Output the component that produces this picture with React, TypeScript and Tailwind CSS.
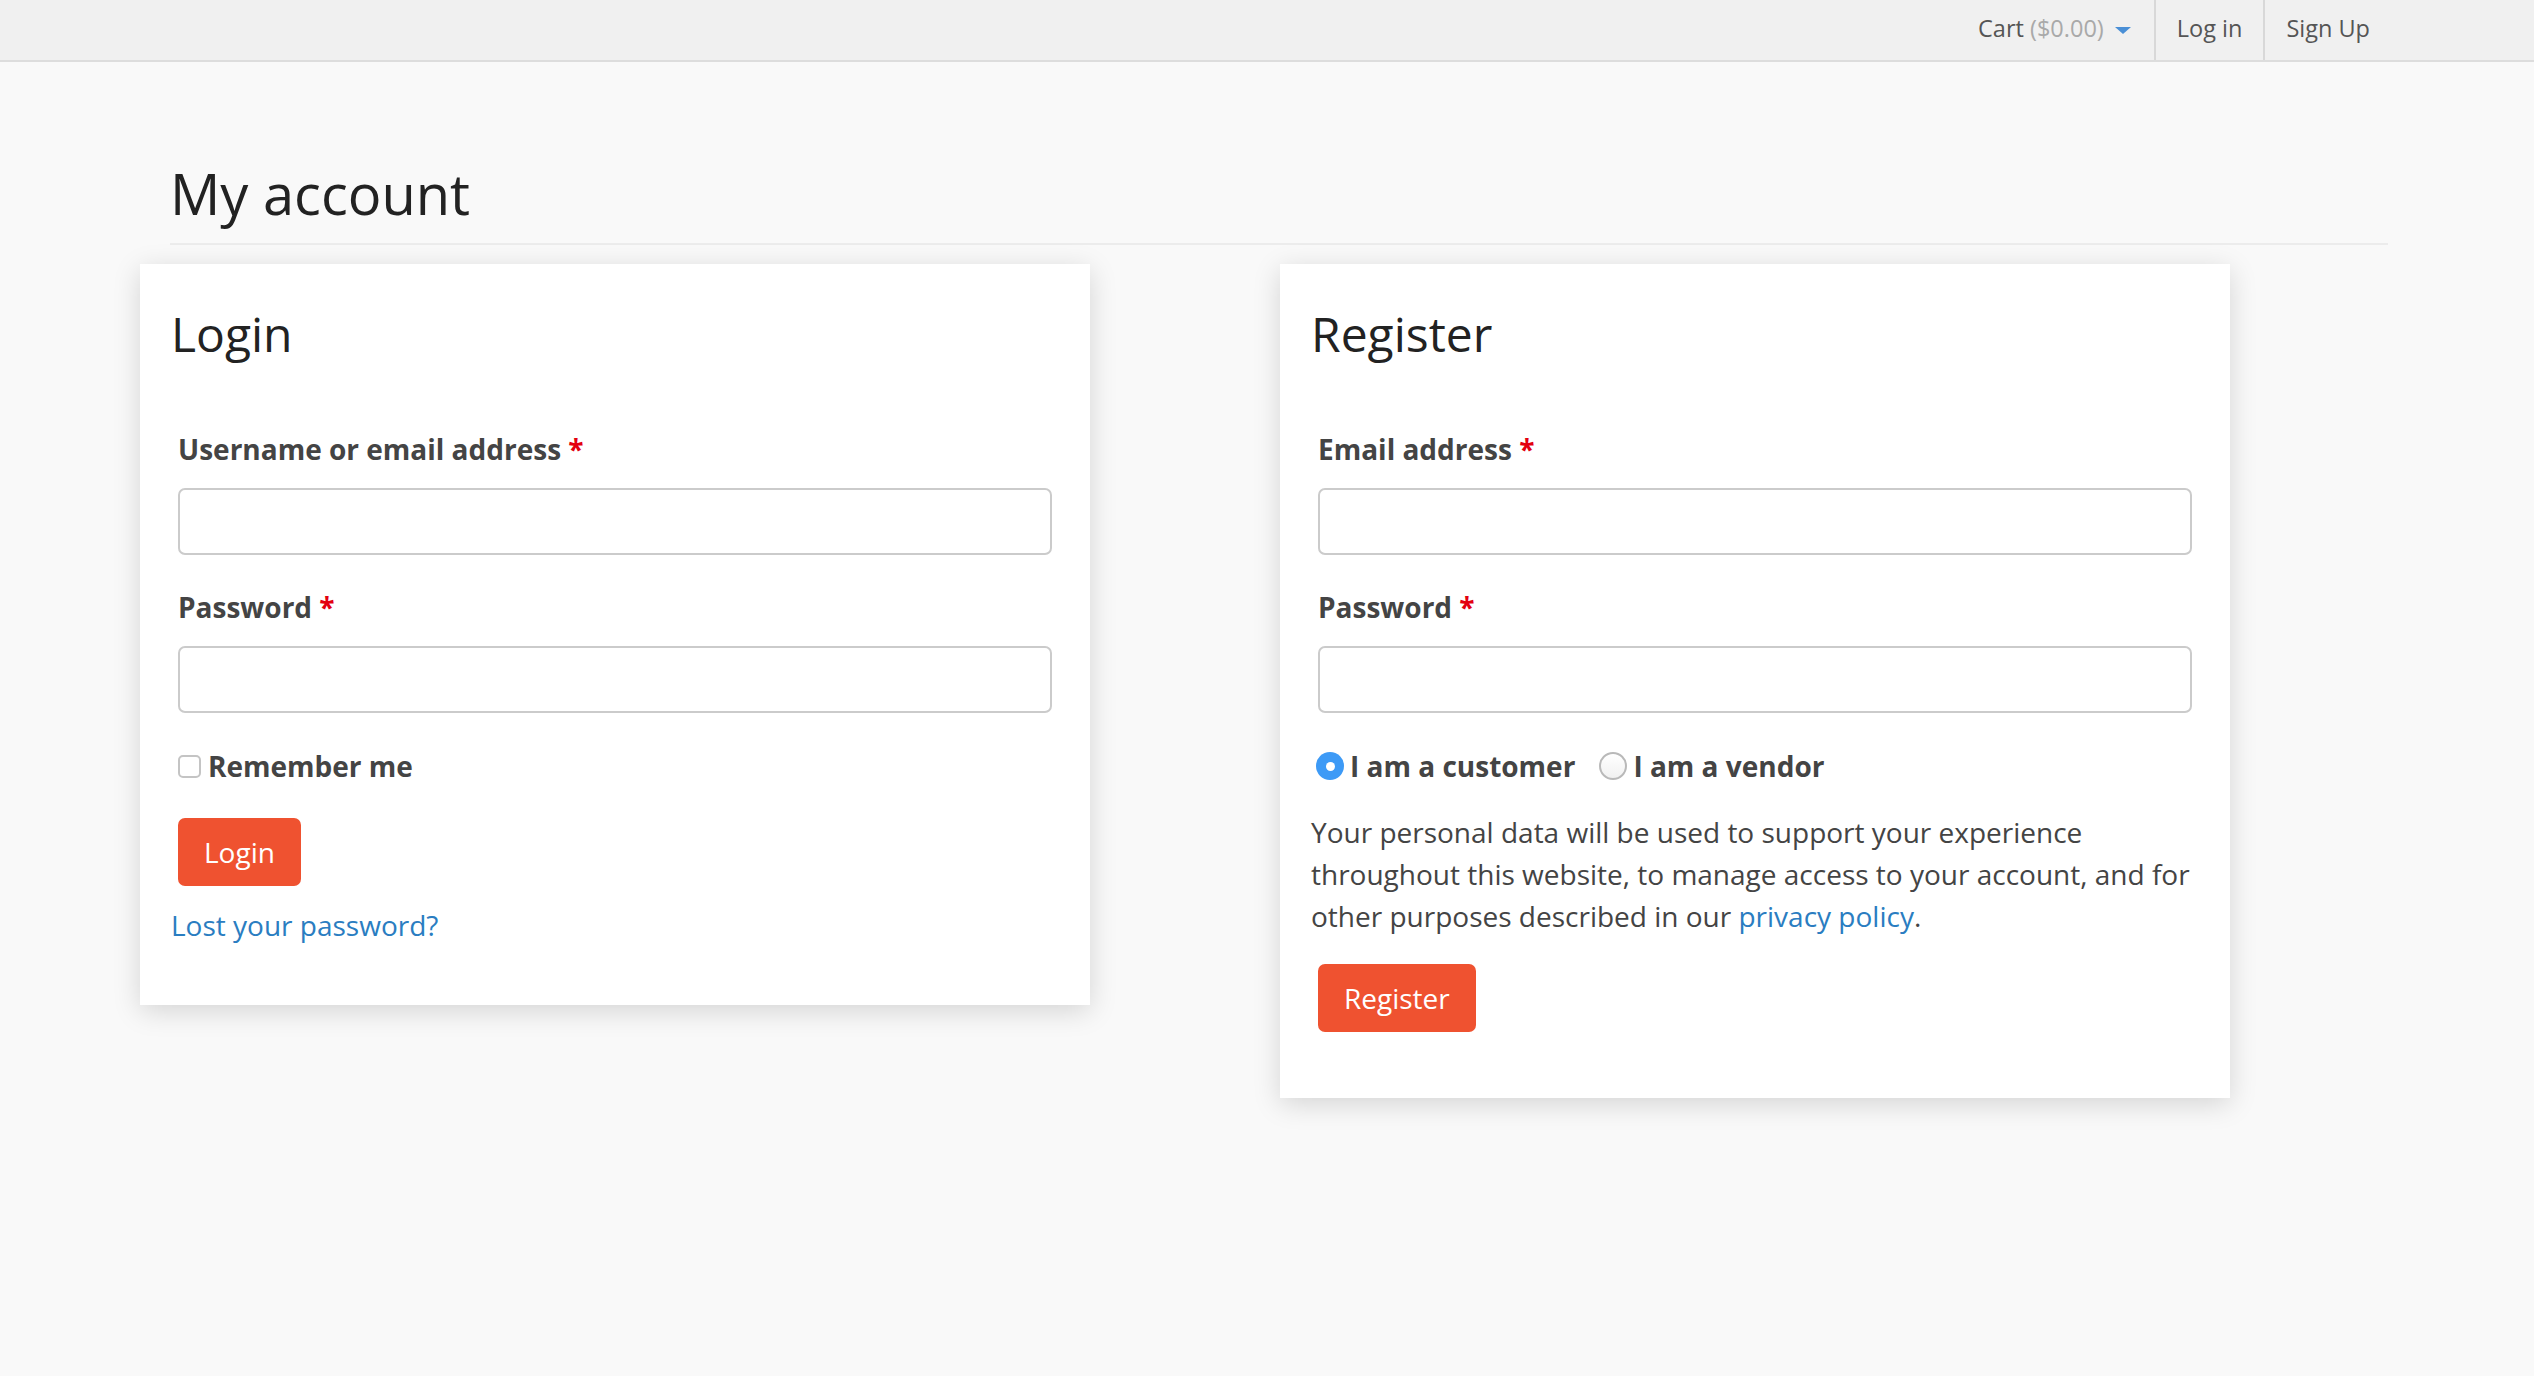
import React from "react";

function Field({ label }: { label: string }) {
  return (
    <div className="px-[7px]">
      <label className="block text-[28px] leading-[28px] font-bold text-[#444]">
        {label} <span className="text-[#e3000f]">*</span>
      </label>
      <input
        type="text"
        className="mt-[25px] block h-[67px] w-full rounded-[7px] border-2 border-[#cbcbcb] bg-white px-4 text-[28px] outline-none"
      />
    </div>
  );
}

function Card({ children }: { children: React.ReactNode }) {
  return (
    <section className="w-[950px] bg-white px-[31px] pt-[46px] pb-[66px] shadow-[0_6px_26px_rgba(0,0,0,0.15)]">
      {children}
    </section>
  );
}

function Radio({ checked }: { checked?: boolean }) {
  return checked ? (
    <span className="flex size-[28px] items-center justify-center rounded-full bg-[#3d9af6]">
      <span className="size-[9px] rounded-full bg-white" />
    </span>
  ) : (
    <span className="size-[28px] rounded-full border-2 border-[#b9b9b9] bg-gradient-to-b from-white to-[#f1f1f1]" />
  );
}

export default function App() {
  return (
    <div className="min-h-screen bg-[#f9f9f9] font-['Open_Sans',sans-serif] text-[#444]">
      <header className="h-[62px] border-b-2 border-[#dddddd] bg-[#f0f0f0]">
        <nav className="mr-[143px] ml-[170px] flex h-full justify-end text-[23.5px] text-[#555]">
          <a className="flex items-center gap-[11px] pr-[23px] pb-[3px] pl-[22px]">
            <span>
              Cart <span className="text-[#a9a9a9]">($0.00)</span>
            </span>
            <span className="mt-[4px] h-0 w-0 border-x-[8px] border-t-[7px] border-x-transparent border-t-[#4a8fd6]" />
          </a>
          <a className="flex items-center border-l-2 border-[#d8d8d8] px-[21px] pb-[3px]">Log in</a>
          <a className="flex items-center border-l-2 border-[#d8d8d8] px-[21px] pb-[3px]">Sign Up</a>
        </nav>
      </header>

      <main className="mr-[146px] ml-[170px] pt-[102px] pb-[120px]">
        <h1 className="border-b-2 border-[#ececec] pb-[21px] text-[56px] leading-[58px] font-normal text-[#222]">
          My account
        </h1>

        <div className="-ml-[30px] mt-[19px] flex items-start gap-[190px]">
          <Card>
            <h2 className="text-[48px] leading-[47px] text-[#222]">Login</h2>
            <div className="mt-[78px]">
              <Field label="Username or email address" />
            </div>
            <div className="mt-[38px]">
              <Field label="Password" />
            </div>
            <label className="mt-[39px] flex h-[28px] items-center gap-[7px] px-[7px] text-[28px] leading-[28px] font-bold text-[#444]">
              <span className="size-[23px] rounded-[5px] border-2 border-[#c4c4c4] bg-white" />
              Remember me
            </label>
            <div className="mt-[38px] px-[7px]">
              <button className="h-[68px] rounded-[7px] bg-[#ef5230] px-[26px] text-[28px] text-white">
                Login
              </button>
            </div>
            <a className="mt-[25px] block text-[28px] leading-[28px] text-[#2a7dc1]">
              Lost your password?
            </a>
          </Card>

          <Card>
            <h2 className="text-[48px] leading-[47px] text-[#222]">Register</h2>
            <div className="mt-[78px]">
              <Field label="Email address" />
            </div>
            <div className="mt-[38px]">
              <Field label="Password" />
            </div>
            <div className="mt-[39px] flex h-[28px] items-center px-[5px] text-[28px] leading-[28px] font-bold text-[#444]">
              <span className="flex items-center gap-[6px]">
                <Radio checked />
                I am a customer
              </span>
              <span className="ml-[24px] flex items-center gap-[6px]">
                <Radio />
                I am a vendor
              </span>
            </div>
            <p className="mt-[31px] text-[28px] leading-[42px] text-[#444]">
              Your personal data will be used to support your experience
              <br />
              throughout this website, to manage access to your account, and for
              <br />
              other purposes described in our <a className="text-[#2a7dc1]">privacy policy</a>.
            </p>
            <div className="mt-[27px] px-[7px]">
              <button className="h-[68px] rounded-[7px] bg-[#ef5230] px-[26px] text-[28px] text-white">
                Register
              </button>
            </div>
          </Card>
        </div>
      </main>
    </div>
  );
}
